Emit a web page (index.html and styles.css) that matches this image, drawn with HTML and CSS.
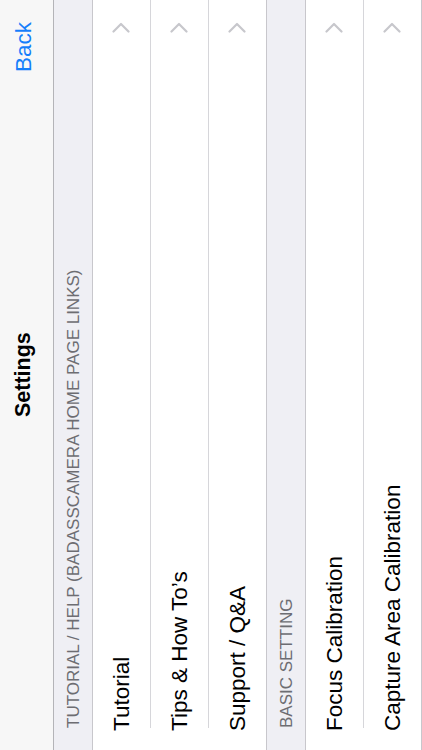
FILE: index.html
```html
<!DOCTYPE html>
<html lang="en">
<head>
<meta charset="utf-8">
<title>Settings</title>
<link rel="stylesheet" href="styles.css">
</head>
<body>
<div class="screen">
  <header class="nav">
    <span class="spacer"></span>
    <h1 class="title">Settings</h1>
    <a class="back">Back</a>
  </header>

  <div class="section-header">TUTORIAL / HELP (BADASSCAMERA HOME PAGE LINKS)</div>
  <ul class="group">
    <li class="row"><span class="label">Tutorial</span><svg class="chev" viewBox="0 0 18 11" width="18" height="11"><path d="M1.5 1.5 L9 9 L16.5 1.5" /></svg></li>
    <li class="row"><span class="label">Tips &amp; How To’s</span><svg class="chev" viewBox="0 0 18 11" width="18" height="11"><path d="M1.5 1.5 L9 9 L16.5 1.5" /></svg></li>
    <li class="row"><span class="label">Support / Q&amp;A</span><svg class="chev" viewBox="0 0 18 11" width="18" height="11"><path d="M1.5 1.5 L9 9 L16.5 1.5" /></svg></li>
  </ul>

  <div class="section-header">BASIC SETTING</div>
  <ul class="group">
    <li class="row"><span class="label">Focus Calibration</span><svg class="chev" viewBox="0 0 18 11" width="18" height="11"><path d="M1.5 1.5 L9 9 L16.5 1.5" /></svg></li>
    <li class="row"><span class="label">Capture Area Calibration</span><svg class="chev" viewBox="0 0 18 11" width="18" height="11"><path d="M1.5 1.5 L9 9 L16.5 1.5" /></svg></li>
  </ul>
</div>
</body>
</html>
```

FILE: styles.css
```css
html, body {
  margin: 0;
  padding: 0;
  width: 422px;
  height: 750px;
  overflow: hidden;
  background: #efeff4;
}

/* The app screen is shown turned on its side: text runs bottom-to-top,
   sections stack left-to-right. vertical-rl + a half turn gives that. */
.screen {
  width: 422px;
  height: 750px;
  writing-mode: vertical-rl;
  text-orientation: sideways;
  transform: rotate(180deg);
  background: #efeff4;
  font-family: "Liberation Sans", Arial, Helvetica, sans-serif;
  overflow: hidden;
}

.nav {
  box-sizing: border-box;
  block-size: 54px;
  padding-inline: 22px;
  padding-block-end: 5px;
  background: #f7f7f7;
  border-block-end: 1px solid #b4b4b8;
  display: grid;
  grid-template-columns: 1fr auto 1fr;
  align-items: center;
}

.title {
  margin: 0;
  font-size: 21.5px;
  font-weight: 700;
  color: #000;
  line-height: 1;
}

.back {
  justify-self: end;
  font-size: 22.5px;
  color: #157efb;
  line-height: 1;
}

.section-header {
  box-sizing: border-box;
  block-size: 38px;
  padding-inline: 22px 20px;
  padding-block-end: 10px;
  display: flex;
  align-items: flex-end;
  font-size: 17px;
  line-height: 17px;
  color: #6d6d72;
  white-space: nowrap;
}

.group {
  list-style: none;
  margin: 0;
  padding: 0;
  background: #fff;
  border-block-start: 1px solid #c8c7cc;
  border-block-end: 1px solid #c8c7cc;
}

.row {
  box-sizing: border-box;
  block-size: 58px;
  margin-inline-start: 22px;
  padding-inline-end: 22px;
  display: flex;
  align-items: center;
  justify-content: space-between;
  border-block-end: 1px solid #d6d6da;
}

.row:last-child {
  block-size: 57px;
  border-block-end: none;
}

.label {
  margin-inline-start: -3px;
  font-size: 22.5px;
  color: #000;
  white-space: nowrap;
}

.chev {
  flex: none;
}

.chev path {
  fill: none;
  stroke: #c7c7cc;
  stroke-width: 2.2;
  stroke-linecap: round;
  stroke-linejoin: round;
}
```
